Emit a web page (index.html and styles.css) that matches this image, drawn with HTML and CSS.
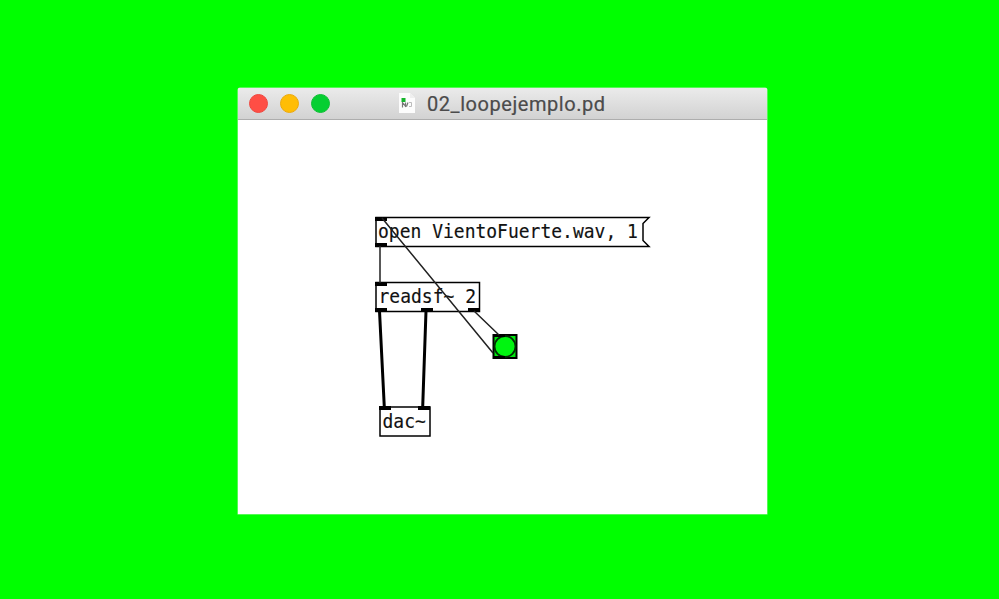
FILE: index.html
```html
<!DOCTYPE html>
<html lang="es">
<head>
<meta charset="utf-8">
<title>02_loopejemplo.pd</title>
<link rel="stylesheet" href="styles.css">
</head>
<body>
<main class="window">
  <header class="titlebar">
    <div class="controls">
      <span class="dot close"></span>
      <span class="dot minimize"></span>
      <span class="dot expand"></span>
    </div>
    <div class="title">
      <svg class="file-icon" width="16" height="20" viewBox="0 0 16 20">
        <path d="M0 0H11L16 5V20H0Z" fill="#fcfcfc"/>
        <path d="M11 0V5H16Z" fill="#efefef"/>
        <path d="M3.500 8V14.500M6.500 9.500V14M4 10L7 14M9 9.500L7.500 13.500" fill="none" stroke="#777" stroke-width="1.200"/>
        <path d="M10 9.500H12.500V13.500H10" fill="none" stroke="#bbb"/>
        <rect x="2.500" y="5" width="4" height="4" fill="#16b52c"/>
      </svg>
      <span class="name">02_loopejemplo.pd</span>
    </div>
  </header>
  <svg class="patch" width="529" height="394" viewBox="238 120 529 394">
    <g class="box">
      <path d="M376 217.500H649L643 223.500V240.500L649 246.500H376Z"/>
      <rect x="376" y="282.500" width="103.500" height="29"/>
      <rect x="380" y="407" width="50" height="29"/>
    </g>
    <g class="port">
      <rect x="375" y="217" width="12" height="4"/>
      <rect x="375" y="243" width="12" height="4"/>
      <rect x="375" y="282" width="12" height="4"/>
      <rect x="375" y="308" width="12" height="4"/>
      <rect x="421" y="308" width="12" height="4"/>
      <rect x="468" y="308" width="12" height="4"/>
      <rect x="379" y="406" width="12" height="4"/>
      <rect x="418" y="406" width="12" height="4"/>
    </g>
    <g class="label">
      <text transform="translate(378 238) scale(1 1.08)">open VientoFuerte.wav, 1</text>
      <text transform="translate(378.500 303) scale(1 1.08)">readsf~ 2</text>
      <text transform="translate(382.500 427.500) scale(1 1.08)">dac~</text>
    </g>
    <rect class="bang" x="493.500" y="335" width="23" height="23"/>
    <circle class="bang-circle" cx="505" cy="346.500" r="10.500"/>
    <path class="bang-port" d="M493 335.500H505M493 357.500H505"/>
    <path class="cord" d="M380 246V283M474 311L499 335M493 353L382 218"/>
    <path class="signal" d="M379.500 311L384.300 407M426 311L422.700 407"/>
  </svg>
</main>
</body>
</html>
```

FILE: styles.css
```css
body {
  margin: 0;
  height: 599px;
  background: #00ff00;
  display: flex;
  align-items: flex-start;
  overflow: hidden;
}

.window {
  width: 529px;
  margin: 88px 0 0 238px;
  background: #fff;
  border-radius: 2px 2px 0 0;
  box-shadow: 0 0 0 0.5px #a8f5a8;
  overflow: hidden;
}

.titlebar {
  box-sizing: border-box;
  height: 32px;
  display: flex;
  align-items: center;
  padding-left: 10.5px;
  background: linear-gradient(#ebebeb, #d2d2d2);
  border-bottom: 1px solid #adadad;
}

.controls {
  display: flex;
  gap: 12px;
  margin-top: -1px;
}

.dot {
  box-sizing: border-box;
  width: 19px;
  height: 19px;
  border-radius: 50%;
}

.close { background: #ff4e45; border: 1px solid #ee4840; }
.minimize { background: #ffbd05; border: 1px solid #eda90c; }
.expand { background: #05cf32; border: 1px solid #0fc035; }

.title {
  display: flex;
  align-items: center;
  margin-left: 69.5px;
  gap: 12px;
}

.file-icon {
  display: block;
  margin-top: -1px;
}

.name {
  font: 20px/30px Roboto, "Liberation Sans", sans-serif;
  letter-spacing: 0.55px;
  color: #4b4b4b;
  -webkit-text-stroke: 0.2px #4b4b4b;
  white-space: nowrap;
}

.patch { display: block; }

.box { fill: #fff; stroke: #000; stroke-width: 1.5; }

.port { fill: #000; }

.label {
  font: 18px "DejaVu Sans Mono", monospace;
  fill: #111;
  stroke: #111;
  stroke-width: 0.15;
  white-space: pre;
}

.bang { fill: #00e80f; stroke: #000; stroke-width: 2; }

.bang-circle { fill: #00f510; stroke: #042d06; stroke-width: 1.8; }

.bang-port { stroke: #000; stroke-width: 3; }

.cord { fill: none; stroke: #222; stroke-width: 1.5; }

.signal { fill: none; stroke: #000; stroke-width: 3; }
```
